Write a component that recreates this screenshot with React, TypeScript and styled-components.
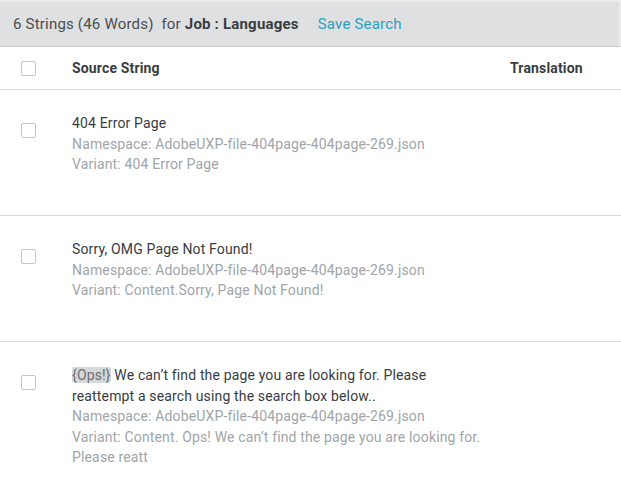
import React from "react";
import styled, { createGlobalStyle } from "styled-components";

const Global = createGlobalStyle`
  html, body { margin: 0; padding: 0; background: #fff; }
  body { font-family: Roboto, "Liberation Sans", Arial, sans-serif; color: #383c3f; }
`;

const Page = styled.div`
  width: 621px;
  height: 489px;
  overflow: hidden;
  background: #fff;
  border-top: 2px solid #ececec;
  box-sizing: border-box;
`;

const SummaryBar = styled.div`
  height: 44px;
  background: #dfe0e1;
  border-bottom: 1px solid #c6c8ca;
  border-right: 2px solid #ebebeb;
  display: flex;
  align-items: center;
  padding-left: 13px;
  font-size: 15px;
  letter-spacing: 0.2px;
  color: #4a4e51;
  white-space: pre;
`;

const Strong = styled.b`
  font-weight: 700;
  color: #3a3d40;
`;

const LinkText = styled.a`
  margin-left: 19px;
  color: #2a9fc0;
  text-decoration: none;
  cursor: pointer;
`;

const Grid = styled.div`
  display: grid;
  grid-template-columns: 72px 438px 1fr;
`;

const HeaderRow = styled(Grid)`
  height: 42px;
  border-bottom: 1px solid #dcdcdc;
  align-items: center;
  font-size: 14px;
  letter-spacing: 0.15px;
  font-weight: 700;
  color: #3a3d40;
`;

const Row = styled(Grid)`
  height: 126px;
  border-bottom: 1px solid #dcdcdc;
  padding-top: 23px;
  align-items: start;
  box-sizing: border-box;
  &:last-child {
    border-bottom: none;
    height: auto;
  }
`;

const Check = styled.span<{ $top?: number }>`
  display: block;
  width: 13px;
  height: 13px;
  margin-left: 21px;
  margin-top: ${(p) => p.$top ?? 0}px;
  border: 1px solid #c4c7c9;
  border-radius: 2px;
  background: #fff;
`;

const TextBlock = styled.div`
  width: 416px;
  font-size: 14px;
  letter-spacing: 0.15px;
  line-height: 20.5px;
`;

const Source = styled.div`
  color: #383c3f;
`;

const Meta = styled.div`
  color: #a0a5a8;
`;

const Tag = styled.span`
  background: #d6d7d8;
  color: #6b6f72;
  border-radius: 2px;
`;

const rows = [
  {
    source: <>404 Error Page</>,
    ns: "Namespace: AdobeUXP-file-404page-404page-269.json",
    variant: "Variant: 404 Error Page",
  },
  {
    source: <>Sorry, OMG Page Not Found!</>,
    ns: "Namespace: AdobeUXP-file-404page-404page-269.json",
    variant: "Variant: Content.Sorry, Page Not Found!",
  },
  {
    source: (
      <>
        <Tag>{"{Ops!}"}</Tag> We can’t find the page you are looking for. Please reattempt a search using the search box below..
      </>
    ),
    ns: "Namespace: AdobeUXP-file-404page-404page-269.json",
    variant: "Variant: Content. Ops! We can’t find the page you are looking for. Please reatt",
  },
];

export default function App() {
  return (
    <Page>
      <Global />
      <SummaryBar>
        6 Strings (46 Words)  for <Strong>Job : Languages</Strong>
        <LinkText>Save Search</LinkText>
      </SummaryBar>
      <HeaderRow>
        <Check />
        <span>Source String</span>
        <span>Translation</span>
      </HeaderRow>
      {rows.map((r, i) => (
        <Row key={i}>
          <Check $top={10} />
          <TextBlock>
            <Source>{r.source}</Source>
            <Meta>{r.ns}</Meta>
            <Meta>{r.variant}</Meta>
          </TextBlock>
          <div />
        </Row>
      ))}
    </Page>
  );
}
